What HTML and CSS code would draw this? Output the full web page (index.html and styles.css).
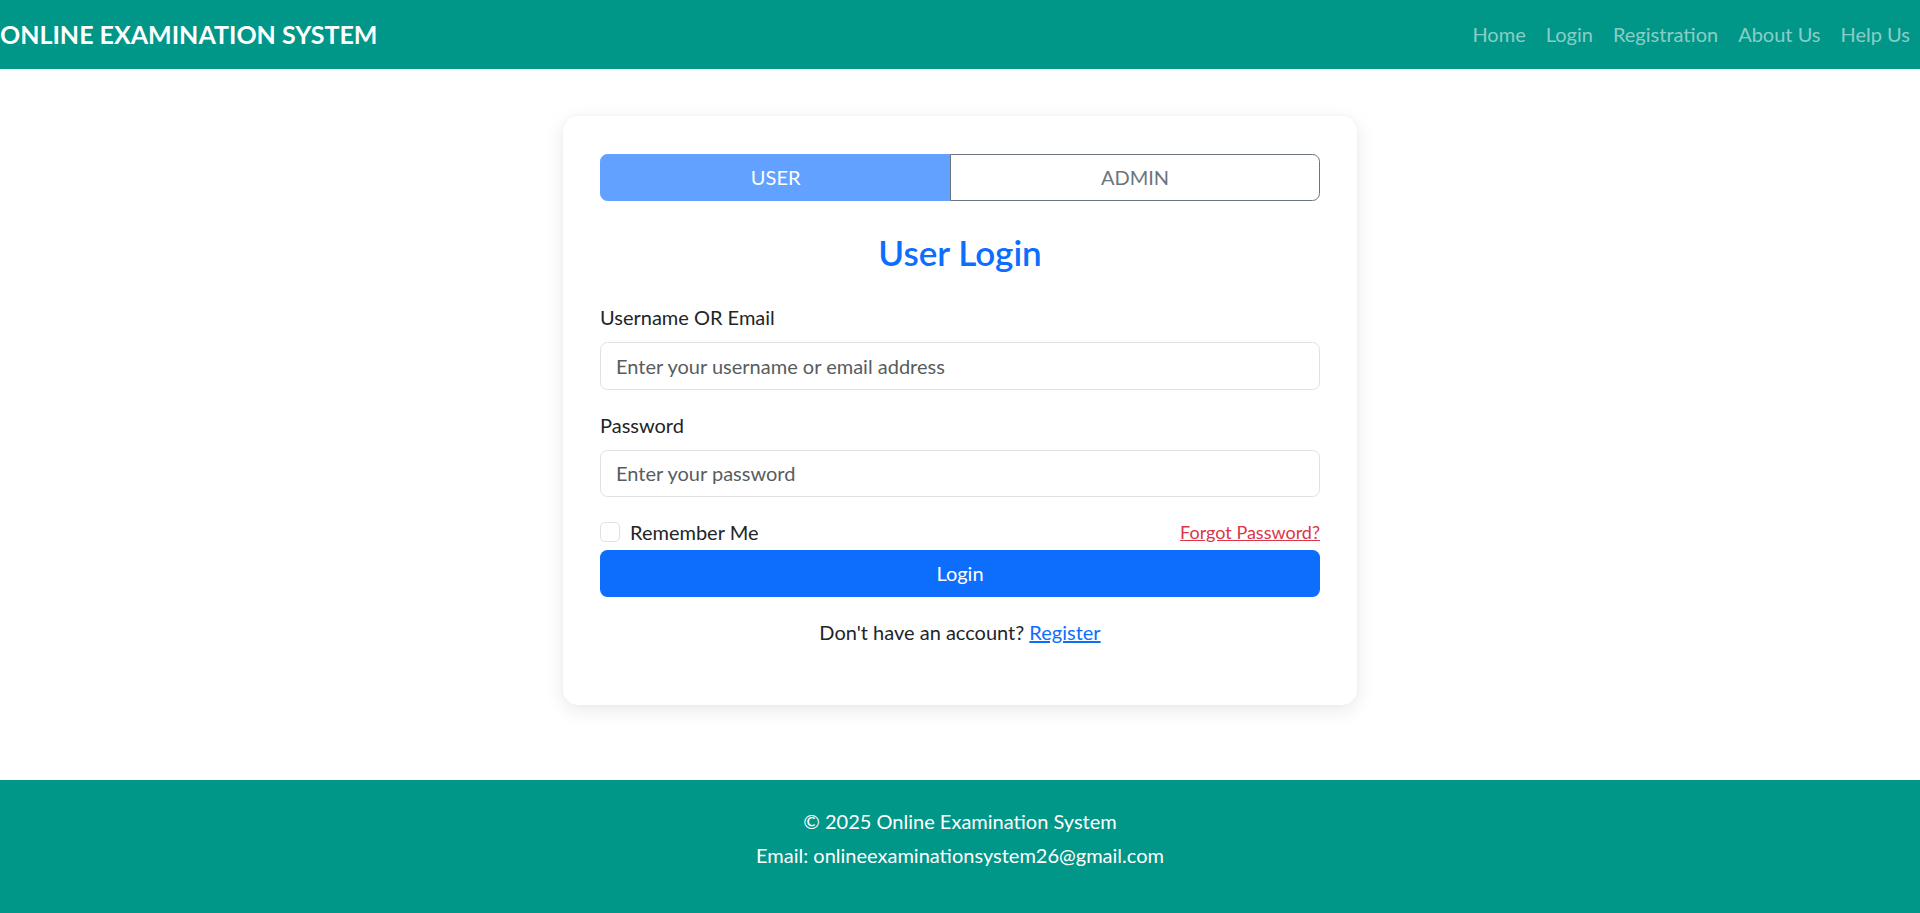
FILE: index.html
```html
<!DOCTYPE html>
<html lang="en">
<head>
<meta charset="utf-8">
<title>Online Examination System - User Login</title>
<link rel="stylesheet" href="styles.css">
</head>
<body>
<nav class="navbar">
  <a class="brand" href="#">ONLINE EXAMINATION SYSTEM</a>
  <ul class="nav-links">
    <li><a class="nav-link" href="#">Home</a></li>
    <li><a class="nav-link" href="#">Login</a></li>
    <li><a class="nav-link" href="#">Registration</a></li>
    <li><a class="nav-link" href="#">About Us</a></li>
    <li><a class="nav-link" href="#">Help Us</a></li>
  </ul>
</nav>

<main class="main">
  <div class="card">
    <div class="tabs">
      <button class="tab tab-active" type="button">USER</button>
      <button class="tab" type="button">ADMIN</button>
    </div>
    <h3 class="title">User Login</h3>
    <form class="form">
      <div class="field">
        <label class="label">Username OR Email</label>
        <input class="input" type="text" placeholder="Enter your username or email address">
      </div>
      <div class="field">
        <label class="label">Password</label>
        <input class="input" type="password" placeholder="Enter your password">
      </div>
      <div class="options">
        <label class="check"><input class="checkbox" type="checkbox"><span>Remember Me</span></label>
        <a class="forgot" href="#">Forgot Password?</a>
      </div>
      <button class="btn-login" type="button">Login</button>
    </form>
    <p class="register">Don't have an account? <a class="register-link" href="#">Register</a></p>
  </div>
</main>

<footer class="footer">
  <p class="footer-line">© 2025 Online Examination System</p>
  <p class="footer-line">Email: onlineexaminationsystem26@gmail.com</p>
</footer>
</body>
</html>
```

FILE: styles.css
```css
* {
  box-sizing: border-box;
}

html, body {
  margin: 0;
  padding: 0;
}

body {
  font-family: Lato, "Noto Sans", sans-serif;
  font-size: 20px;
  line-height: 1.5;
  color: #212529;
  background: #ffffff;
}

/* Navbar */
.navbar {
  height: 69px;
  background: #009688;
  display: flex;
  align-items: center;
  justify-content: space-between;
}

.brand {
  font-size: 25px;
  font-weight: 700;
  color: #ffffff;
  text-decoration: none;
  line-height: 1.5;
}

.nav-links {
  list-style: none;
  margin: 0 0 2px;
  padding: 0;
  display: flex;
  align-items: center;
}

.nav-link {
  display: block;
  padding: 0 10px;
  color: rgba(255, 255, 255, 0.55);
  text-decoration: none;
  font-size: 20px;
  line-height: 30px;
}

/* Main */
.main {
  padding: 47px 0 75px;
}

.card {
  width: 794px;
  margin: 0 auto;
  padding: 37.5px 37px;
  background: #ffffff;
  border-radius: 15px;
  box-shadow: 0 5px 20px rgba(0, 0, 0, 0.09), 0 0 4px rgba(0, 0, 0, 0.03);
}

.tabs {
  display: flex;
  width: 100%;
  margin-bottom: 30px;
}

.tab {
  flex: 1 1 auto;
  height: 47.5px;
  padding: 0 15px;
  font-family: inherit;
  font-size: 20px;
  color: #6c757d;
  background: #ffffff;
  border: 1.25px solid #6c757d;
  border-radius: 0 7.5px 7.5px 0;
  margin-left: -1.25px;
}

.tab-active {
  background: #62a1ff;
  border-color: #62a1ff;
  color: #ffffff;
  border-radius: 7.5px 0 0 7.5px;
  margin-left: 0;
}

.title {
  margin: 0 0 29px;
  text-align: center;
  font-size: 35px;
  font-weight: 600;
  line-height: 42px;
  color: #0d6efd;
}

.form {
  margin: 0;
}

.field {
  margin-bottom: 20px;
}

.label {
  display: block;
  margin-bottom: 10px;
  line-height: 30px;
}

.input {
  display: block;
  width: 100%;
  height: 47.5px;
  padding: 0 15px;
  font-family: inherit;
  font-size: 20px;
  color: #212529;
  background: #ffffff;
  border: 1.25px solid #dee2e6;
  border-radius: 7.5px;
}

.input::placeholder {
  color: #595c5f;
}

.options {
  display: flex;
  align-items: center;
  justify-content: space-between;
  height: 30px;
  margin-bottom: 2.5px;
}

.check {
  display: flex;
  align-items: center;
  gap: 10px;
}

.checkbox {
  appearance: none;
  -webkit-appearance: none;
  width: 20px;
  height: 20px;
  margin: 0;
  border: 1.25px solid #dee2e6;
  border-radius: 5px;
  background: #ffffff;
}

.forgot {
  font-size: 18px;
  color: #dc3545;
  text-decoration: underline;
}

.btn-login {
  display: block;
  width: 100%;
  height: 47.5px;
  font-family: inherit;
  font-size: 20px;
  color: #ffffff;
  background: #0d6efd;
  border: none;
  border-radius: 7.5px;
}

.register {
  margin: 20px 0 20px;
  text-align: center;
  line-height: 30px;
}

.register-link {
  color: #0d6efd;
  text-decoration: underline;
}

/* Footer */
.footer {
  background: #009688;
  color: #ffffff;
  text-align: center;
  padding: 26px 0 43px;
}

.footer-line {
  margin: 0;
  line-height: 30px;
}

.footer-line:first-child {
  margin-bottom: 4.5px;
}
```
